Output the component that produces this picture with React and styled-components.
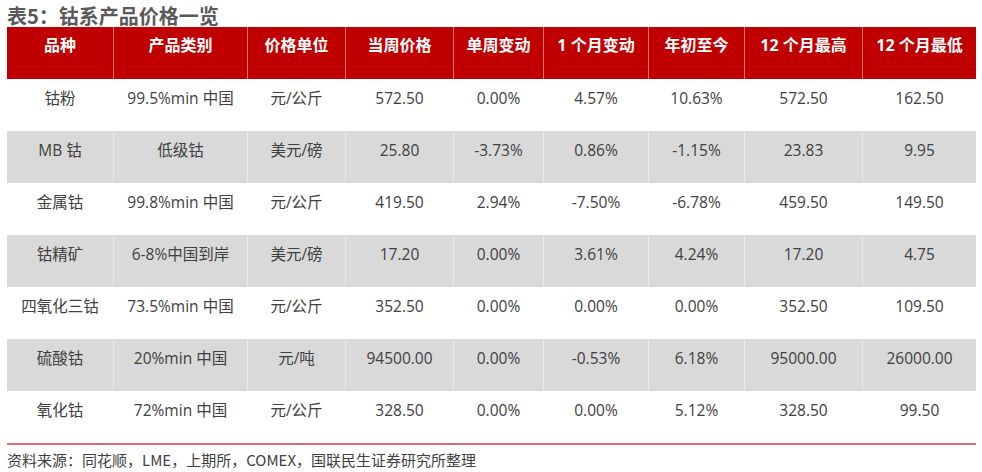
import React from 'react'
import styled, { createGlobalStyle } from 'styled-components'

const GlobalStyle = createGlobalStyle`
  body {
    margin: 0;
    background: #ffffff;
    font-family: "Open Sans", "Noto Sans CJK SC", sans-serif;
  }
`

const Page = styled.div`
  padding: 0 6px 0 7px;
  width: 969px;
`

const Title = styled.h1`
  margin: 0;
  padding-top: 4px;
  height: 23px;
  line-height: 23px;
  font-size: 20px;
  font-weight: 700;
  color: #595959;
  font-family: "Noto Sans CJK SC", sans-serif;
`

const Table = styled.div`
  display: flex;
  flex-direction: column;
  border-bottom: 2px solid #e06b6b;
`

const Row = styled.div`
  display: grid;
  grid-template-columns: 106px 134px 98px 108px 90px 105px 96px 118px 114px;
  height: 52px;
  background: ${({ $head, $shaded }) => ($head ? '#c00000' : $shaded ? '#d9d9d9' : '#ffffff')};
  color: ${({ $head }) => ($head ? '#ffffff' : '#404040')};
  font-weight: ${({ $head }) => ($head ? 700 : 400)};
`

const Cell = styled.div`
  text-align: center;
  font-size: ${({ $head }) => ($head ? '16px' : '15.5px')};
  line-height: 20px;
  padding-top: ${({ $head }) => ($head ? '8px' : '9px')};
  white-space: nowrap;
  & + & {
    border-left: 1px solid ${({ $head, $shaded }) =>
      $head ? 'rgba(255,255,255,0.3)' : $shaded ? 'rgba(255,255,255,0.45)' : 'transparent'};
  }
`

const Source = styled.div`
  margin-top: 5px;
  font-size: 15px;
  line-height: 20px;
  color: #404040;
  font-family: "Noto Sans CJK SC", sans-serif;
`

const headers = ['品种', '产品类别', '价格单位', '当周价格', '单周变动', '1 个月变动', '年初至今', '12 个月最高', '12 个月最低']

const rows = [
  ['钴粉', '99.5%min 中国', '元/公斤', '572.50', '0.00%', '4.57%', '10.63%', '572.50', '162.50'],
  ['MB 钴', '低级钴', '美元/磅', '25.80', '-3.73%', '0.86%', '-1.15%', '23.83', '9.95'],
  ['金属钴', '99.8%min 中国', '元/公斤', '419.50', '2.94%', '-7.50%', '-6.78%', '459.50', '149.50'],
  ['钴精矿', '6-8%中国到岸', '美元/磅', '17.20', '0.00%', '3.61%', '4.24%', '17.20', '4.75'],
  ['四氧化三钴', '73.5%min 中国', '元/公斤', '352.50', '0.00%', '0.00%', '0.00%', '352.50', '109.50'],
  ['硫酸钴', '20%min 中国', '元/吨', '94500.00', '0.00%', '-0.53%', '6.18%', '95000.00', '26000.00'],
  ['氧化钴', '72%min 中国', '元/公斤', '328.50', '0.00%', '0.00%', '5.12%', '328.50', '99.50'],
]

export default function App() {
  return (
    <Page>
      <GlobalStyle />
      <Title>表5：钴系产品价格一览</Title>
      <Table>
        <Row $head>
          {headers.map((h) => (
            <Cell key={h} $head>{h}</Cell>
          ))}
        </Row>
        {rows.map((r, i) => (
          <Row key={r[0]} $shaded={i % 2 === 1}>
            {r.map((v, j) => (
              <Cell key={j} $shaded={i % 2 === 1}>{v}</Cell>
            ))}
          </Row>
        ))}
      </Table>
      <Source>资料来源：同花顺，LME，上期所，COMEX，国联民生证券研究所整理</Source>
    </Page>
  )
}
